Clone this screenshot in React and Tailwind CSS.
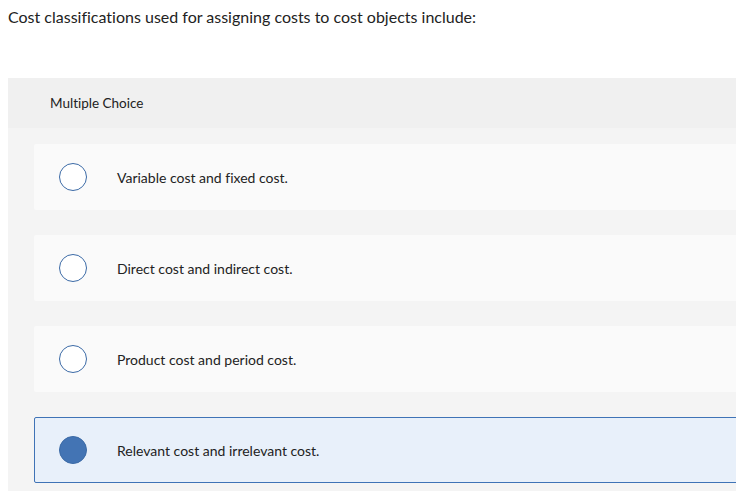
import React, { useState } from 'react';

const OPTIONS = [
    'Variable cost and fixed cost.',
    'Direct cost and indirect cost.',
    'Product cost and period cost.',
    'Relevant cost and irrelevant cost.',
];

function Radio({ checked }) {
    return checked ? (
        <span className="block h-[28px] w-[28px] shrink-0 rounded-full border border-[#3b6aa6] bg-[#4374b4]" />
    ) : (
        <span className="block h-[28px] w-[28px] shrink-0 rounded-full border-[1.5px] border-[#3b6aa6] bg-white" />
    );
}

function App() {
    const [selected, setSelected] = useState(3);

    return (
        <div className="h-[491px] w-[736px] overflow-hidden bg-white text-[#222] [font-family:Lato,'Liberation_Sans',sans-serif] [font-variant-ligatures:none]">
            <p className="px-[8px] pt-[7px] text-[16px] leading-[20px]">
                Cost classifications used for assigning costs to cost objects include:
            </p>

            <div className="ml-[8px] mt-[51px] w-[800px] bg-[#f4f4f4]">
                <div className="flex h-[50px] items-center bg-[#f0f0f0] pl-[42px] text-[13.5px]">
                    Multiple Choice
                </div>

                <div className="flex flex-col gap-[25px] pb-[8px] pl-[26px] pt-[16px]">
                    {OPTIONS.map((text, i) => (
                        <button
                            key={text}
                            onClick={() => setSelected(i)}
                            className={
                                i === selected
                                    ? 'flex h-[66px] items-center gap-[30px] rounded-[2px] border border-[#3f73b6] bg-[#e8f0fa] pl-[24px] text-left text-[14px]'
                                    : 'flex h-[66px] items-center gap-[30px] rounded-[2px] border border-transparent bg-[#fafafa] pl-[24px] text-left text-[14px]'
                            }
                        >
                            <Radio checked={i === selected} />
                            <span>{text}</span>
                        </button>
                    ))}
                </div>
            </div>
        </div>
    );
}

export default App;
